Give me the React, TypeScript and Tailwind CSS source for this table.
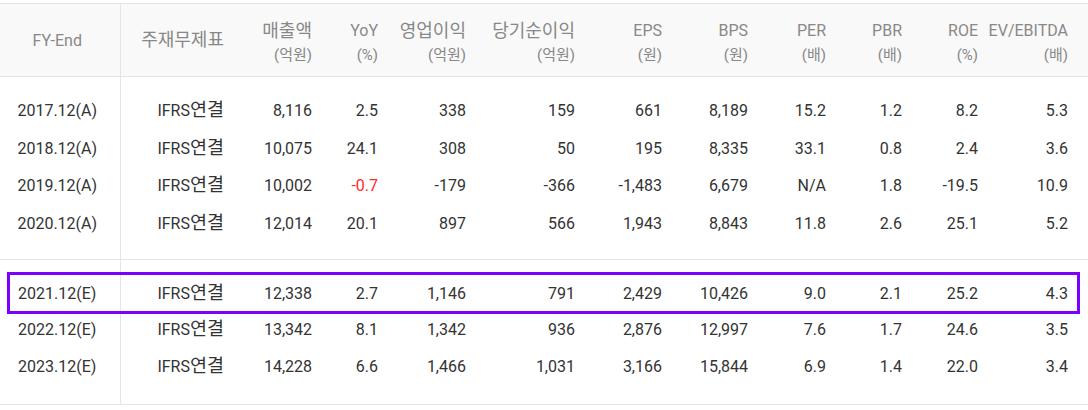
import React from 'react';

type Row = {
  fy: string;
  values: string[];
};

const widths = [120, 112, 88, 66, 88, 109, 87, 86, 78, 76, 76, 102];

// [label, unit, label is hangul]
const headers: [string, string, boolean][] = [
  ['매출액', '(억원)', true],
  ['YoY', '(%)', false],
  ['영업이익', '(억원)', true],
  ['당기순이익', '(억원)', true],
  ['EPS', '(원)', false],
  ['BPS', '(원)', false],
  ['PER', '(배)', false],
  ['PBR', '(배)', false],
  ['ROE', '(%)', false],
  ['EV/EBITDA', '(배)', false],
];

const actual: Row[] = [
  { fy: '2017.12(A)', values: ['8,116', '2.5', '338', '159', '661', '8,189', '15.2', '1.2', '8.2', '5.3'] },
  { fy: '2018.12(A)', values: ['10,075', '24.1', '308', '50', '195', '8,335', '33.1', '0.8', '2.4', '3.6'] },
  { fy: '2019.12(A)', values: ['10,002', '-0.7', '-179', '-366', '-1,483', '6,679', 'N/A', '1.8', '-19.5', '10.9'] },
  { fy: '2020.12(A)', values: ['12,014', '20.1', '897', '566', '1,943', '8,843', '11.8', '2.6', '25.1', '5.2'] },
];

const estimate: Row[] = [
  { fy: '2021.12(E)', values: ['12,338', '2.7', '1,146', '791', '2,429', '10,426', '9.0', '2.1', '25.2', '4.3'] },
  { fy: '2022.12(E)', values: ['13,342', '8.1', '1,342', '936', '2,876', '12,997', '7.6', '1.7', '24.6', '3.5'] },
  { fy: '2023.12(E)', values: ['14,228', '6.6', '1,466', '1,031', '3,166', '15,844', '6.9', '1.4', '22.0', '3.4'] },
];

function Spacer({ h }: { h: string }) {
  return (
    <tr className={h}>
      <td className="border-r border-[#e5e5e5]" />
      <td colSpan={11} />
    </tr>
  );
}

function DataRow({ row, h }: { row: Row; h: string }) {
  return (
    <tr className={h}>
      <td className="border-r border-[#e5e5e5] pr-[5px] text-center">{row.fy}</td>
      <td className="pr-2 text-right">
        IFRS<span className="text-[18.5px] leading-none">연결</span>
      </td>
      {row.values.map((v, i) => (
        <td
          key={i}
          className={`text-right ${i === 9 ? 'pr-5' : 'pr-2'} ${i === 1 && v.startsWith('-') ? 'text-[#ff2b2b]' : ''}`}
        >
          {v}
        </td>
      ))}
    </tr>
  );
}

export default function App() {
  return (
    <div className="relative w-[1088px] h-[410px] bg-white pt-[3px] font-['Roboto','Noto_Sans_CJK_KR',sans-serif] text-[16px] text-[#333]">
      <table className="w-[1088px] table-fixed border-collapse">
        <colgroup>
          {widths.map((w, i) => (
            <col key={i} style={{ width: w }} />
          ))}
        </colgroup>
        <thead>
          <tr className="h-[73px] border-y border-[#e5e5e5] bg-[#f9f9f9] text-[#888] leading-[25px]">
            <th className="border-r border-[#e5e5e5] pr-[5px] text-center font-normal">FY-End</th>
            <th className="pr-2 text-right font-normal">
              <span className="text-[18px]">주재무제표</span>
            </th>
            {headers.map(([a, b, ko], i) => (
              <th key={a} className={`pt-[5px] text-right font-normal ${i === 9 ? 'pr-5' : 'pr-2'}`}>
                <div className={ko ? 'text-[18px]' : ''}>{a}</div>
                <div className="text-[15px]">{b}</div>
              </th>
            ))}
          </tr>
        </thead>
        <tbody className="border-b border-[#e5e5e5]">
          <Spacer h="h-[16px]" />
          {actual.map(r => (
            <DataRow key={r.fy} row={r} h="h-[37.5px]" />
          ))}
          <Spacer h="h-[17px]" />
        </tbody>
        <tbody className="border-b border-[#e5e5e5]">
          <Spacer h="h-[16px]" />
          {estimate.map(r => (
            <DataRow key={r.fy} row={r} h="h-[36.5px]" />
          ))}
          <Spacer h="h-[19px]" />
        </tbody>
      </table>
      {/* highlight box around 2021 estimate */}
      <div className="absolute left-[7px] top-[272px] w-[1073px] h-[42px] border-[3px] border-[#7b00ff] pointer-events-none" />
    </div>
  );
}
